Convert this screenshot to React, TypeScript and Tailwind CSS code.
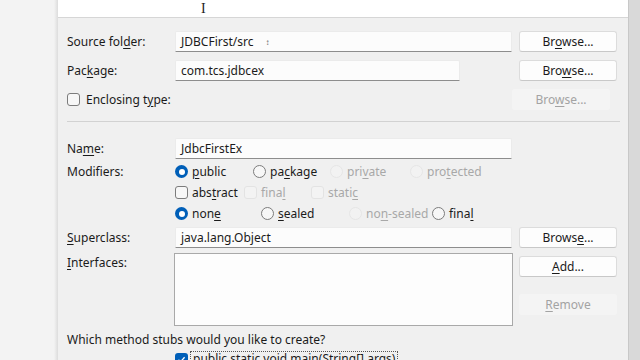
import React from "react";

const U = ({ children }: { children: React.ReactNode }) => (
  <span className="underline underline-offset-[2px] decoration-1">{children}</span>
);

const Btn = ({ children, disabled }: { children: React.ReactNode; disabled?: boolean }) => (
  <div
    className={
      "h-[21px] w-[98px] flex items-center justify-center rounded-[3px] " +
      (disabled
        ? "bg-[#f4f4f4] text-[#a3a3a3]"
        : "bg-[#fdfdfd] border border-[#dcdcdc] border-b-[#c8c8c8] text-[#1b1b1b]")
    }
  >
    <span className="leading-none">{children}</span>
  </div>
);

const Input = ({ value, w = "w-[337px]", extra }: { value: string; w?: string; extra?: React.ReactNode }) => (
  <div
    className={`h-[21px] ${w} bg-[#fcfcfc] border border-[#ebebeb] border-b-[#8d8d8d] rounded-t-[2px] flex items-center pl-[5px] text-[#1b1b1b]`}
  >
    <span className="leading-none">{value}</span>
    {extra}
  </div>
);

const Radio = ({ on, disabled }: { on?: boolean; disabled?: boolean }) => {
  if (on)
    return (
      <span className="w-[13px] h-[13px] rounded-full bg-[#005fb8] flex items-center justify-center shrink-0">
        <span className="w-[6px] h-[6px] rounded-full bg-white" />
      </span>
    );
  return (
    <span
      className={
        "w-[13px] h-[13px] rounded-full border shrink-0 " +
        (disabled ? "border-[#e6e6e6] bg-[#f2f2f2]" : "border-[#7c7c7c] bg-[#f7f7f7]")
      }
    />
  );
};

const Check = ({ on, disabled }: { on?: boolean; disabled?: boolean }) => {
  if (on)
    return (
      <span className="w-[13px] h-[13px] rounded-[3px] bg-[#005fb8] flex items-center justify-center shrink-0">
        <svg width="9" height="9" viewBox="0 0 9 9">
          <path d="M1.5 4.8 L3.6 6.8 L7.6 2.2" stroke="white" strokeWidth="1.3" fill="none" />
        </svg>
      </span>
    );
  return (
    <span
      className={
        "w-[13px] h-[13px] rounded-[3px] border shrink-0 " +
        (disabled ? "border-[#e3e3e3] bg-[#f3f3f3]" : "border-[#7c7c7c] bg-[#f7f7f7]")
      }
    />
  );
};

export default function App() {
  return (
    <div
      className="w-[640px] h-[360px] overflow-hidden flex bg-[#f2f2f2] text-[12px] text-[#1b1b1b]"
      style={{ fontFamily: '"Noto Sans", "Open Sans", sans-serif' }}
    >
      <div className="w-[58px] h-full bg-[#f3f3f3] flex justify-end">
        <div className="w-[4px] h-full bg-gradient-to-r from-[#f3f3f3] to-[#dcdcdc]" />
      </div>
      <div className="w-[570px] h-full bg-[#f0f0f0] flex flex-col relative">
        <div className="h-[18px] bg-white border-b border-[#d6d6d6] shrink-0 relative">
          <span
            className="absolute left-[143px] top-[2px] text-[14px] leading-none text-[#222]"
            style={{ fontFamily: '"Liberation Serif", serif' }}
          >
            I
          </span>
        </div>
        <div className="pl-[9px] flex flex-col">
          {/* Source folder */}
          <div className="mt-[13px] flex items-center h-[21px]">
            <div className="w-[108px]">
              Source fol<U>d</U>er:
            </div>
            <Input
              value="JDBCFirst/src"
              extra={<span className="ml-[12px] text-[8px] text-[#666] leading-none">↕</span>}
            />
            <div className="ml-[7px]">
              <Btn>
                Br<U>o</U>wse...
              </Btn>
            </div>
          </div>
          {/* Package */}
          <div className="mt-[8px] flex items-center h-[21px]">
            <div className="w-[108px]">
              Pac<U>k</U>age:
            </div>
            <Input value="com.tcs.jdbcex" w="w-[285px]" />
            <div className="ml-[59px]">
              <Btn>
                Bro<U>w</U>se...
              </Btn>
            </div>
          </div>
          {/* Enclosing */}
          <div className="mt-[8px] flex items-center h-[21px]">
            <div className="w-[445px] flex items-center gap-[6px]">
              <Check />
              <span>
                Enclosing t<U>y</U>pe:
              </span>
            </div>
            <Btn disabled>
              Bro<U>w</U>se...
            </Btn>
          </div>
          {/* separator */}
          <div className="mt-[11px] h-px bg-[#d2d2d2] mr-[8px]" />
          {/* Name */}
          <div className="mt-[16px] flex items-center h-[21px]">
            <div className="w-[108px]">
              Na<U>m</U>e:
            </div>
            <Input value="JdbcFirstEx" />
          </div>
          {/* Modifiers */}
          <div className="mt-[2px] flex">
            <div className="w-[108px] h-[21px] flex items-center">Modifiers:</div>
            <div className="flex flex-col">
              <div className="h-[21px] flex items-center">
                <div className="w-[78px] flex items-center gap-[4px]">
                  <Radio on />
                  <span>
                    <U>p</U>ublic
                  </span>
                </div>
                <div className="w-[77px] flex items-center gap-[4px]">
                  <Radio />
                  <span>
                    pa<U>c</U>kage
                  </span>
                </div>
                <div className="w-[80px] flex items-center gap-[4px] text-[#a8a8a8]">
                  <Radio disabled />
                  <span>
                    pri<U>v</U>ate
                  </span>
                </div>
                <div className="flex items-center gap-[4px] text-[#a8a8a8]">
                  <Radio disabled />
                  <span>
                    pro<U>t</U>ected
                  </span>
                </div>
              </div>
              <div className="h-[21px] flex items-center">
                <div className="w-[69px] flex items-center gap-[4px]">
                  <Check />
                  <span>
                    abs<U>t</U>ract
                  </span>
                </div>
                <div className="w-[67px] flex items-center gap-[4px] text-[#a8a8a8]">
                  <Check disabled />
                  <span>
                    fina<U>l</U>
                  </span>
                </div>
                <div className="flex items-center gap-[4px] text-[#a8a8a8]">
                  <Check disabled />
                  <span>
                    stati<U>c</U>
                  </span>
                </div>
              </div>
              <div className="h-[21px] flex items-center">
                <div className="w-[86px] flex items-center gap-[4px]">
                  <Radio on />
                  <span>
                    non<U>e</U>
                  </span>
                </div>
                <div className="w-[88px] flex items-center gap-[4px]">
                  <Radio />
                  <span>
                    <U>s</U>ealed
                  </span>
                </div>
                <div className="w-[83px] flex items-center gap-[4px] text-[#a8a8a8]">
                  <Radio disabled />
                  <span>
                    no<U>n</U>-sealed
                  </span>
                </div>
                <div className="flex items-center gap-[4px]">
                  <Radio />
                  <span>
                    fina<U>l</U>
                  </span>
                </div>
              </div>
            </div>
          </div>
          {/* Superclass */}
          <div className="mt-[3px] flex items-center h-[21px]">
            <div className="w-[108px]">
              <U>S</U>uperclass:
            </div>
            <Input value="java.lang.Object" />
            <div className="ml-[7px]">
              <Btn>
                Brows<U>e</U>...
              </Btn>
            </div>
          </div>
          {/* Interfaces */}
          <div className="mt-[5px] flex">
            <div className="w-[108px] pt-[1px]">
              <U>I</U>nterfaces:
            </div>
            <div className="w-[339px] h-[73px] -ml-[1px] bg-[#fdfdfd] border border-[#a9a9a9]" />
            <div className="ml-[6px] flex flex-col">
              <div className="mt-[3px]">
                <Btn>
                  <U>A</U>dd...
                </Btn>
              </div>
              <div className="mt-[17px]">
                <Btn disabled>
                  <U>R</U>emove
                </Btn>
              </div>
            </div>
          </div>
          {/* Which */}
          <div className="mt-[5px] h-[18px] flex items-center">Which method stubs would you like to create?</div>
          <div className="mt-[2px] flex items-center h-[16px]">
            <div className="w-[108px]" />
            <Check on />
            <span className="ml-[2px] px-[2px] border border-dotted border-[#555] leading-[14px]">
              public static void main(String[] args)
            </span>
          </div>
        </div>
      </div>
      <div className="flex-1 h-full bg-[#d9d9d9] border-l border-[#c8c8c8]" />
    </div>
  );
}
